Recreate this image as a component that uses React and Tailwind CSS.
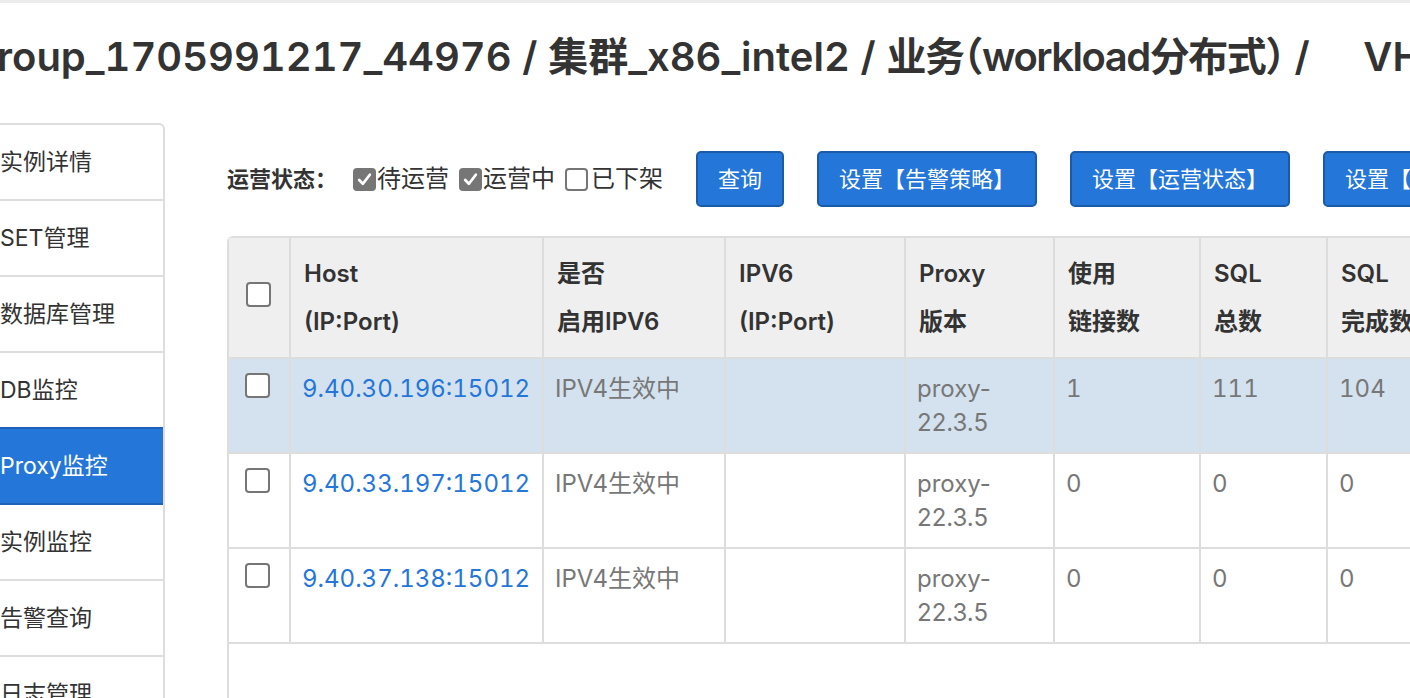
import { useState } from 'react';

const FONT = "font-['Inter','Noto_Sans_CJK_SC',sans-serif]";

const menu = ['实例详情', 'SET管理', '数据库管理', 'DB监控', 'Proxy监控', '实例监控', '告警查询', '日志管理'];

const columns = [
    { key: 'host', w: 253, title: ['Host', '(IP:Port)'], num: true },
    { key: 'ipv6on', w: 182, title: ['是否', '启用IPV6'] },
    { key: 'ipv6', w: 180, title: ['IPV6', '(IP:Port)'] },
    { key: 'ver', w: 149, title: ['Proxy', '版本'] },
    { key: 'conn', w: 146, title: ['使用', '链接数'], num: true },
    { key: 'total', w: 127, title: ['SQL', '总数'], num: true },
    { key: 'done', w: 150, title: ['SQL', '完成数'], num: true },
    { key: 'fail', w: 150, title: ['SQL', '失败数'], num: true },
];

const rows = [
    { id: 1, host: '9.40.30.196:15012', ipv6on: 'IPV4生效中', ipv6: '', ver: ['proxy-', '22.3.5'], conn: '1', total: '111', done: '104', fail: '7' },
    { id: 2, host: '9.40.33.197:15012', ipv6on: 'IPV4生效中', ipv6: '', ver: ['proxy-', '22.3.5'], conn: '0', total: '0', done: '0', fail: '0' },
    { id: 3, host: '9.40.37.138:15012', ipv6on: 'IPV4生效中', ipv6: '', ver: ['proxy-', '22.3.5'], conn: '0', total: '0', done: '0', fail: '0' },
];

function Check({ checked, size = 'w-[23px] h-[23px]' }) {
    if (checked) {
        return (
            <span className={`${size} inline-flex items-center justify-center rounded-[4px] bg-[#767676] shrink-0`}>
                <svg viewBox="0 0 16 16" className="w-[17px] h-[17px]">
                    <path d="M3 8.5 L6.5 12 L13 3.5" fill="none" stroke="white" strokeWidth="2.6" strokeLinecap="round" strokeLinejoin="round" />
                </svg>
            </span>
        );
    }
    return <span className={`${size} inline-block rounded-[4px] border-2 border-[#767676] bg-white shrink-0`}></span>;
}

export default function App() {
    const [active] = useState('Proxy监控');
    const [selected, setSelected] = useState(1);

    return (
        <div className={`w-[1410px] h-[698px] overflow-hidden bg-white border-t-[3px] border-[#ececec] text-[#333] ${FONT}`}>
            <h1 className="-ml-[28px] mt-[30px] whitespace-nowrap text-[40px] leading-[48px] font-semibold text-[#333] [font-feature-settings:'halt','tnum']">
                group_1705991217_44976 / 集群_x86_intel2 / <span className="tracking-[-1.5px]">业务（workload分布式）</span>&nbsp;/&nbsp;&nbsp;&nbsp;&nbsp;&nbsp;VH
            </h1>

            <div className="flex mt-[42px]">
                <aside className="-ml-[16px] w-[181px] shrink-0 border-2 border-l-0 border-[#dddddd] rounded-tr-[6px]">
                    {menu.map(item => (
                        <div
                            key={item}
                            className={`h-[76px] pl-[16px] flex items-center text-[23px] whitespace-nowrap border-b-2 ${
                                item === active
                                    ? 'bg-[#2576d9] text-white border-[#1d62b8] -mt-[2px] h-[78px] border-t-2'
                                    : 'text-[#333] border-[#dddddd]'
                            }`}
                        >
                            {item}
                        </div>
                    ))}
                </aside>

                <main className="ml-[62px] flex-1 min-w-0">
                    <div className="mt-[28px] flex items-center whitespace-nowrap">
                        <span className="text-[22px] font-bold mr-[16px]">运营状态：</span>
                        <label className="flex items-center text-[24px] mr-[10px]"><Check checked /><span className="ml-[1px]">待运营</span></label>
                        <label className="flex items-center text-[24px] mr-[10px]"><Check checked /><span className="ml-[1px]">运营中</span></label>
                        <label className="flex items-center text-[24px]"><Check /><span className="ml-[3px]">已下架</span></label>
                        {['查询', '设置【告警策略】', '设置【运营状态】', '设置【负责人】'].map(b => (
                            <button
                                key={b}
                                className="ml-[33px] h-[56px] px-[20px] shrink-0 rounded-[5px] border-2 border-[#1b5aa6] bg-[#2576d9] text-white text-[22px]"
                            >
                                {b}
                            </button>
                        ))}
                    </div>

                    <div className="mt-[29px] h-[500px] border-l-2 border-t-2 border-[#dddddd] rounded-tl-[6px]">
                        <table className="w-[1398px] table-fixed border-collapse whitespace-nowrap">
                            <colgroup>
                                <col className="w-[61px]" />
                                {columns.map(c => <col key={c.key} style={{ width: c.w }} />)}
                            </colgroup>
                            <thead>
                                <tr className="bg-[#efefef] h-[120px]">
                                    <th className="border-r-2 border-b-2 border-[#dddddd] pl-[17px] text-left">
                                        <Check size="w-[25px] h-[25px]" />
                                    </th>
                                    {columns.map(c => (
                                        <th key={c.key} className="border-r-2 border-b-2 border-[#dddddd] pl-[13px] text-left align-middle text-[24px] leading-[48px] font-semibold text-[#333]">
                                            {c.title[0]}<br />{c.title[1]}
                                        </th>
                                    ))}
                                </tr>
                            </thead>
                            <tbody>
                                {rows.map(r => (
                                    <tr
                                        key={r.id}
                                        onClick={() => setSelected(r.id)}
                                        className={`h-[95px] ${selected === r.id ? 'bg-[#d4e2ef]' : 'bg-white'}`}
                                    >
                                        <td className="border-r-2 border-b-2 border-[#dddddd] align-top pl-[16px] pt-[14px]">
                                            <Check size="w-[25px] h-[25px]" />
                                        </td>
                                        {columns.map(c => (
                                            <td key={c.key} className={`border-r-2 border-b-2 border-[#dddddd] align-top pl-[11px] pt-[13px] text-[24px] leading-[34px] ${c.num ? 'tabular-nums' : ''} ${c.key === 'host' ? 'text-[#2576d9]' : 'text-[#777]'}`}>
                                                {Array.isArray(r[c.key]) ? <>{r[c.key][0]}<br />{r[c.key][1]}</> : r[c.key]}
                                            </td>
                                        ))}
                                    </tr>
                                ))}
                            </tbody>
                        </table>
                    </div>
                </main>
            </div>
        </div>
    );
}
